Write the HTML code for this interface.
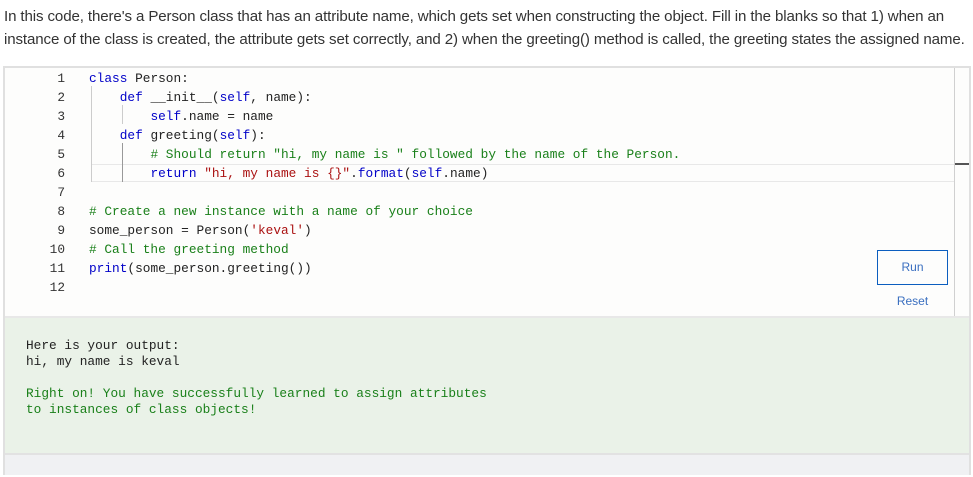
<!DOCTYPE html><html><head><style>
body{margin:0;width:973px;height:477px;background:#fff;font-family:"Liberation Sans",sans-serif;position:relative;overflow:hidden}
.p{position:absolute;left:4px;top:5px;width:990px;font-size:15.1px;line-height:23px;color:#333;white-space:nowrap;letter-spacing:-0.12px}
.box{position:absolute;left:3px;top:66px;width:964px;height:405px;border:2px solid #e0e0e0;background:#fdfdfc}
.code{position:absolute;top:0;left:0;width:950px;height:250px;font-family:"Liberation Mono",monospace;font-size:12.8px}
.l{position:absolute;left:0;height:19px;line-height:19px;white-space:pre;color:#222}
.n{position:absolute;width:60px;text-align:right;color:#333;left:0}
.c{position:absolute;left:84px}
.k{color:#0000c8}.g{color:#1a801a}.s{color:#a11}
.out{position:absolute;left:0;top:248px;width:964px;height:135px;background:#eaf2e8;border-top:2px solid #e8e8e8}
.ft{position:absolute;left:0;top:385px;width:964px;height:20px;background:#f0f1f3;border-top:2px solid #e2e2e2}
.ot{position:absolute;left:21px;top:20px;font-family:"Liberation Mono",monospace;font-size:12.8px;line-height:16px;color:#222;white-space:pre}
.ot .gg{color:#1a801a}
</style></head><body>
<div class="p">In this code, there's a Person class that has an attribute name, which gets set when constructing the object. Fill in the blanks so that 1) when an<br>instance of the class is created, the attribute gets set correctly, and 2) when the greeting() method is called, the greeting states the assigned name.</div>
<div class="box">
<div style="position:absolute;left:949px;top:0;width:1px;height:248px;background:#d0d0d0"></div>
<div style="position:absolute;left:950px;top:95px;width:14px;height:2px;background:#555"></div>
<div style="position:absolute;left:86px;top:96px;width:863px;height:16px;border-top:1px solid #e8e8e8;border-bottom:1px solid #e8e8e8"></div>
<div style="position:absolute;left:86px;top:18px;width:1px;height:96px;background:#ccc"></div>
<div style="position:absolute;left:117px;top:37px;width:1px;height:19px;background:#ccc"></div>
<div style="position:absolute;left:117px;top:75px;width:1px;height:39px;background:#999"></div>
<div class="code">
<div class="l" style="top:1px"><span class="n">1</span><span class="c"><span class="k">class</span> Person:</span></div>
<div class="l" style="top:20px"><span class="n">2</span><span class="c">    <span class="k">def</span> __init__(<span class="k">self</span>, name):</span></div>
<div class="l" style="top:39px"><span class="n">3</span><span class="c">        <span class="k">self</span>.name = name</span></div>
<div class="l" style="top:58px"><span class="n">4</span><span class="c">    <span class="k">def</span> greeting(<span class="k">self</span>):</span></div>
<div class="l" style="top:77px"><span class="n">5</span><span class="c">        <span class="g"># Should return "hi, my name is " followed by the name of the Person.</span></span></div>
<div class="l" style="top:96px"><span class="n">6</span><span class="c">        <span class="k">return</span> <span class="s">"hi, my name is {}"</span>.<span class="k">format</span>(<span class="k">self</span>.name)</span></div>
<div class="l" style="top:115px"><span class="n">7</span></div>
<div class="l" style="top:134px"><span class="n">8</span><span class="c"><span class="g"># Create a new instance with a name of your choice</span></span></div>
<div class="l" style="top:153px"><span class="n">9</span><span class="c">some_person = Person(<span class="s">'keval'</span>)</span></div>
<div class="l" style="top:172px"><span class="n">10</span><span class="c"><span class="g"># Call the greeting method</span></span></div>
<div class="l" style="top:191px"><span class="n">11</span><span class="c"><span class="k">print</span>(some_person.greeting())</span></div>
<div class="l" style="top:210px"><span class="n">12</span></div>
</div>
<div style="position:absolute;left:872px;top:182px;width:69px;height:33px;border:1px solid #0b5ebf;color:#3a6fc0;font-size:12px;text-align:center;line-height:33px">Run</div>
<div style="position:absolute;left:872px;top:226px;width:71px;color:#3a6fc0;font-size:12px;text-align:center">Reset</div>
<div class="out"><div class="ot">Here is your output:
hi, my name is keval

<span class="gg">Right on! You have successfully learned to assign attributes
to instances of class objects!</span></div></div>
<div class="ft"></div>
</div>
</body></html>
